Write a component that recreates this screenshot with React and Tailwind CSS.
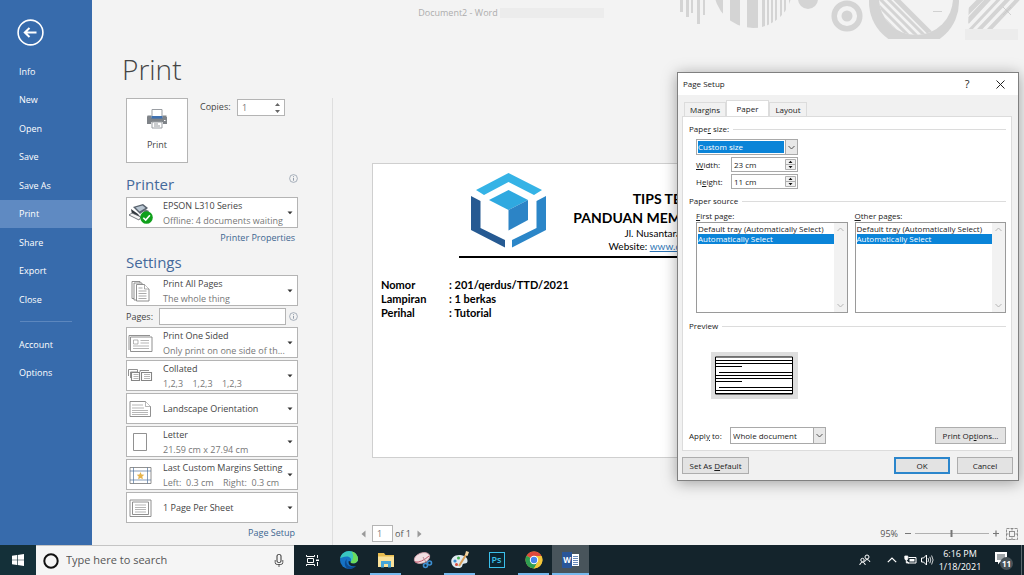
import React from "react";

const menuItems = ["Info", "New", "Open", "Save", "Save As", "Print", "Share", "Export", "Close"];

const Sidebar = () => (
    <aside className="w-[92px] shrink-0 bg-[#376bac] text-white text-[9px]">
        <button type="button" aria-label="Back" className="block mt-[19px] ml-[17px]">
            <svg width="27" height="27" viewBox="0 0 27 27" fill="none" stroke="white">
                <circle cx="13.5" cy="13.5" r="12.4" strokeWidth="1.6" />
                <path d="M19.5 13.5H8.5M12.5 9l-4.7 4.5 4.7 4.5" strokeWidth="2" />
            </svg>
        </button>
        <nav className="mt-[11px]">
            <div className="grid auto-rows-fr h-[257px]">
                {menuItems.map((item) => (
                    <a
                        key={item}
                        href="#"
                        className={`flex items-center pl-[19px] ${item === "Print" ? "bg-[#5f8ac2]" : ""}`}
                    >
                        {item}
                    </a>
                ))}
            </div>
            <hr className="mt-[7px] mb-[9px] mx-5 border-[#5c87be]" />
            <a href="#" className="flex items-center h-7 pl-[19px]">Account</a>
            <a href="#" className="flex items-center h-7 pl-[19px]">Options</a>
        </nav>
    </aside>
);

const Decoration = () => (
    <svg className="absolute right-0 top-0" width="344" height="40" viewBox="680 0 344 40" fill="#d4d4d4">
        <defs>
            <clipPath id="disc"><circle cx="753" cy="-11" r="39" /></clipPath>
            <clipPath id="ringBox"><rect x="860" y="0" width="110" height="39" /></clipPath>
            <clipPath id="ringHole"><circle cx="916" cy="-2" r="37" /></clipPath>
            <clipPath id="corner"><path d="M969 0h51l-26 29h-26z" /></clipPath>
        </defs>
        <path d="M680 0h3v12h-3zM686 0h3v17h-3zM691 0h2v13h-2zM697 0h3v24h-3zM703 0h2v15h-2z" />
        <g clipPath="url(#disc)">
            <path d="M714 0h9v30h-9zM730 0h10v30h-10zM747 0h11v30h-11zM762 0h3v30h-3zM767 0h2v30h-2zM771 0h2v30h-2zM775 0h2v30h-2zM780 0h2v30h-2zM784 0h2v30h-2zM789 0h2v30h-2z" />
        </g>
        <circle cx="808" cy="-1" r="10" />
        <circle cx="847" cy="16" r="12.8" fill="none" stroke="#d4d4d4" strokeWidth="5.5" />
        <circle cx="847" cy="16" r="5.5" />
        <g clipPath="url(#ringBox)">
            <circle cx="914" cy="2" r="45" />
            <circle cx="916" cy="-2" r="37" fill="#f3f3f3" />
            <g clipPath="url(#ringHole)" stroke="#d4d4d4">
                <path d="M893 -4l44 44" strokeWidth="5" />
                <path d="M886 -3l44 44M880 -1l44 44M874 1l44 44M869 4l44 44M864 8l44 44" strokeWidth="3" />
            </g>
        </g>
        <g clipPath="url(#corner)" stroke="#d4d4d4">
            <path d="M1021 -4l-36 38M1012 -5l-36 38" strokeWidth="4" />
            <path d="M1003 -5l-36 38" strokeWidth="3" />
            <path d="M993 -6l-26 28M986 -6l-20 20" strokeWidth="5" />
        </g>
        <path d="M933 11.500h9M1003 7l8 8M1011 7l-8 8" stroke="#c8c8c8" strokeWidth=".8" fill="none" />
        <path d="M965 29h53v11h-53z" fill="#ececec" />
    </svg>
);

const InfoIcon = () => (
    <svg width="9" height="9" viewBox="0 0 9 9" fill="none" stroke="#8793a3">
        <circle cx="4.500" cy="4.500" r="3.900" strokeWidth="0.700" />
        <path d="M4.500 4v2.700M4.500 2.200v1" strokeWidth="0.900" />
    </svg>
);

const PrinterIcon = () => (
    <svg width="22" height="20" viewBox="0 0 22 20">
        <path d="M1.500 6.500h4v2h11v-2h4v1.500h.5v7h-4v-2H5v2H1V8z" fill="#7f8388" />
        <path d="M6 .5h10v7H6z" fill="#fff" stroke="#9a9ea3" />
        <path d="M5.500 7h11v2.600h-11z" fill="#3f71b0" />
        <path d="M6 13h10v6H6z" fill="#fff" stroke="#9a9ea3" />
        <path d="M8 15h4M8 17h6" stroke="#8b8f94" strokeWidth=".9" />
        <path d="M18 11h1.500v1H18z" fill="#fff" />
    </svg>
);

const EpsonIcon = () => (
    <svg width="25" height="24" viewBox="0 0 25 24">
        <path d="M5 6l10-3 5 4-8 6z" fill="#59636e" />
        <path d="M7.500 6.500l7-2 3 2.500-6 3.500z" fill="#b9c6d2" />
        <path d="M3 8l7 5 3 4-9-4z" fill="#30363c" />
        <path d="M1 14l3-2 9 4-2 3z" fill="#f5f5f5" stroke="#555c63" strokeWidth=".8" />
        <path d="M17 8l4 2-2 4-6 1z" fill="#70777e" />
        <circle cx="18.500" cy="16.500" r="6.300" fill="#10a01c" />
        <path d="M15.300 16.700l2.400 2.400 4.200-4.800" stroke="#fff" strokeWidth="1.600" fill="none" />
    </svg>
);

const strokeProps = { fill: "#fff", stroke: "#858585", strokeWidth: 0.9 };

const PagesIcon = () => (
    <svg width="25" height="24" viewBox="0 0 25 24" {...strokeProps}>
        <path d="M4 2.500h8v17H4z" />
        <path d="M6 4h8v17H6z" />
        <path d="M8.500 5.500h8l4.500 4.500v12h-12.500z" />
        <path d="M16.500 5.500v4.500h4.500M10.500 9h4M10.500 12h8M10.500 14.500h8M10.500 17h8M10.500 19.500h8" strokeWidth=".7" />
    </svg>
);

const OneSidedIcon = () => (
    <svg width="25" height="24" viewBox="0 0 25 24" {...strokeProps}>
        <path d="M1 19V4.500h21" fill="none" />
        <path d="M2.500 6h21.500v14.500h-21.500z" />
        <path d="M5.500 9h4.500v4H5.500zM12.500 9.500H21M12.500 12H21M5 15h16M5 17.500h16" strokeWidth=".6" />
    </svg>
);

const CollatedIcon = () => (
    <svg width="25" height="24" viewBox="0 0 25 24" {...strokeProps}>
        <path d="M.5 12V5.500h9V8h-7v6M12 8V6.500h9" />
        <path d="M3.500 8.500h8v8h-8zM13.500 8.500h10v8h-10z" strokeWidth="1.100" />
        <path d="M5.500 10.500h5M5.500 12.500h5M5.500 14.500h5M16 10.500h6M16 12.500h6M16 14.500h6" strokeWidth=".6" />
    </svg>
);

const LandscapeIcon = () => (
    <svg width="25" height="24" viewBox="0 0 25 24" {...strokeProps}>
        <path d="M2 4.500h15.500l5 5v10H2z" />
        <path d="M17.500 4.500v5h5M4 8h11M4 11h12M4 13.500h16M4 15.500h16M4 17.500h16" strokeWidth=".6" />
    </svg>
);

const LetterIcon = () => (
    <svg width="25" height="24" viewBox="0 0 25 24" {...strokeProps}>
        <path d="M5.500 3.500h13v17h-13z" />
    </svg>
);

const MarginsIcon = () => (
    <svg width="25" height="24" viewBox="0 0 25 24" {...strokeProps}>
        <path d="M2 4.500h21v16H2z" />
        <path d="M5.500 4.500v16M19.500 4.500v16M2 8h21M2 17h21" stroke="#51749e" strokeWidth=".7" />
        <path d="M12.500 9l1.100 2.500 2.700.3-2 1.800.6 2.700-2.400-1.400-2.400 1.400.6-2.700-2-1.800 2.700-.3z" fill="#e5b34c" stroke="none" />
    </svg>
);

const SheetIcon = () => (
    <svg width="25" height="24" viewBox="0 0 25 24" {...strokeProps}>
        <path d="M2 4h21v16.500H2z" />
        <path d="M4.500 6h16v12.500h-16z" />
        <path d="M7 9h11M7 11.500h11M7 13.500h11M7 16h11" strokeWidth=".6" />
    </svg>
);

const OptionBox = ({ icon, title, detail }) => (
    <button
        type="button"
        className="flex items-center w-full h-[31px] border border-[#b4b4b4] bg-white text-left text-[9px] leading-[15px]"
    >
        <span className="w-9 pl-px shrink-0">{icon}</span>
        <span className="flex-1 min-w-0 whitespace-pre">
            <span className="block text-[#444]">{title}</span>
            {detail && <span className="block text-[#777]">{detail}</span>}
        </span>
        <svg className="mr-1 shrink-0" width="6" height="4" viewBox="0 0 6 4">
            <path d="M.5 .5h5L3 3.300z" fill="#333" />
        </svg>
    </button>
);

const PrintSettings = () => (
    <section className="w-[241px] shrink-0 pl-[34px] pr-[34px] border-r border-[#dedede] text-[9px] text-[#444]">
        <div className="flex items-start">
            <button
                type="button"
                className="flex flex-col items-center w-[62px] h-[65px] pt-[10px] gap-2 border border-[#b4b4b4] bg-white"
            >
                <PrinterIcon />
                <span className="leading-4">Print</span>
            </button>
            <label htmlFor="copies" className="ml-3 mt-px leading-4 w-[37px]">Copies:</label>
            <div className="flex items-center w-12 h-[17px] mt-px border border-[#b4b4b4] bg-white">
                <input id="copies" defaultValue="1" className="w-9 pl-1 text-[#777] outline-none" />
                <svg width="7" height="12" viewBox="0 0 7 12" fill="#666">
                    <path d="M1 4l2.500-3L6 4zM1 8l2.500 3L6 8z" />
                </svg>
            </div>
        </div>

        <div className="flex justify-between h-[34px] pt-[11px]">
            <h2 className="text-[15px] leading-5 text-[#44699b]">Printer</h2>
            <InfoIcon />
        </div>
        <OptionBox icon={<EpsonIcon />} title="EPSON L310 Series" detail="Offline: 4 documents waiting" />
        <div className="text-right h-[19px] leading-[19px] pr-[3px]">
            <a href="#" className="text-[#3d6691]">Printer Properties</a>
        </div>

        <h2 className="h-7 pt-[5px] text-[15px] leading-5 text-[#44699b]">Settings</h2>
        <div className="flex flex-col gap-[2px]">
            <OptionBox icon={<PagesIcon />} title="Print All Pages" detail="The whole thing" />
            <div className="flex items-center h-[17px]">
                <label htmlFor="pages" className="w-[33px]">Pages:</label>
                <input id="pages" className="w-[128px] h-[17px] px-1 border border-[#b4b4b4] bg-white" />
                <span className="ml-[3px]"><InfoIcon /></span>
            </div>
            <OptionBox icon={<OneSidedIcon />} title="Print One Sided" detail="Only print on one side of th..." />
            <OptionBox icon={<CollatedIcon />} title="Collated" detail="1,2,3    1,2,3    1,2,3" />
            <OptionBox icon={<LandscapeIcon />} title="Landscape Orientation" />
            <OptionBox icon={<LetterIcon />} title="Letter" detail="21.59 cm x 27.94 cm" />
            <OptionBox icon={<MarginsIcon />} title="Last Custom Margins Setting" detail="Left:  0.3 cm    Right:  0.3 cm" />
            <OptionBox icon={<SheetIcon />} title="1 Page Per Sheet" />
        </div>
        <div className="text-right h-[19px] leading-[19px] pr-[3px]">
            <a href="#" className="text-[#3d6691]">Page Setup</a>
        </div>
    </section>
);

const CubeLogo = () => (
    <svg width="75" height="75" viewBox="0 0 75 75">
        <path d="M37.500 0L71 17l-8 5-25.500-13L13 22l-8-5z" fill="#35b3e6" />
        <path d="M0 23l9.500 5v27L34 67v7.500L0 57z" fill="#265a92" />
        <path d="M75 23l-9.500 5v27L41 67v7.500l34-17.500z" fill="#2b86c8" />
        <path d="M37.500 17L57 27 37.500 37 18 27z" fill="#2fa9e0" />
        <path d="M57 27v20L37.500 57.500V37z" fill="#2c84c6" />
    </svg>
);

const letterFields = [
    ["Nomor", ": 201/qerdus/TTD/2021"],
    ["Lampiran", ": 1 berkas"],
    ["Perihal", ": Tutorial"],
];

const Preview = () => (
    <section className="flex-1 min-w-0 flex flex-col justify-between pt-[65px]">
        <article className="ml-[39px] mr-[34px] h-[295px] border border-[#cfcfcf] bg-white text-black font-['Lato',sans-serif]">
            <div className="ml-[86px] mr-4 pl-3 border-b-2 border-black flex h-[94px] pt-[9px]">
                <CubeLogo />
                <div className="flex flex-col w-[135px] pt-4 shrink-0 text-right whitespace-nowrap">
                    <b className="text-[14px] leading-[19px]">TIPS TE</b>
                    <b className="text-[14px] leading-[19px]">PANDUAN MEM</b>
                    <span className="text-[10px] leading-[13px]">Jl. Nusantara</span>
                    <span className="text-[10px] leading-[13px]">
                        Website: <a href="#" className="text-[#2e75b6] underline">www.q</a>
                    </span>
                </div>
            </div>
            <dl className="grid grid-cols-[68px_1fr] mt-5 ml-2 text-[11px] leading-[14px] font-bold">
                {letterFields.map(([name, value]) => (
                    <React.Fragment key={name}>
                        <dt>{name}</dt>
                        <dd>{value}</dd>
                    </React.Fragment>
                ))}
            </dl>
        </article>

        <footer className="flex items-center justify-between h-[23px] pl-7 pr-[6px] text-[9px] text-[#555]">
            <div className="flex items-center">
                <button type="button" aria-label="Previous page">
                    <svg width="5" height="8" viewBox="0 0 5 8"><path d="M4.500 .5v7L.5 4z" fill="#999" /></svg>
                </button>
                <input aria-label="Page" defaultValue="1" className="w-[21px] h-[17px] ml-[6px] pl-1 border border-[#b4b4b4] bg-white text-[#777]" />
                <span className="ml-[2px]">of 1</span>
                <button type="button" aria-label="Next page" className="ml-[6px]">
                    <svg width="5" height="8" viewBox="0 0 5 8"><path d="M.5 .5v7l4-3.500z" fill="#999" /></svg>
                </button>
            </div>
            <div className="flex items-center">
                <span>95%</span>
                <svg className="ml-[6px]" width="96" height="11" viewBox="0 0 96 11" stroke="#777">
                    <path d="M1 5.500h6M89 5.500h6M92 2.500v6" strokeWidth="1.200" />
                    <path d="M11 5.500h74" stroke="#b0b0b0" />
                    <path d="M47.500 2v7" strokeWidth="2" />
                </svg>
                <svg className="ml-[6px]" width="12" height="12" viewBox="0 0 12 12" fill="none" stroke="#777" strokeWidth=".8">
                    <rect x=".5" y=".5" width="11" height="11" strokeDasharray="3 1" />
                    <rect x="3.500" y="3.500" width="5" height="5" />
                    <path d="M6 0v2.500M6 9.500V12M0 6h2.500M9.500 6H12" />
                </svg>
            </div>
        </footer>
    </section>
);

const Chevron = ({ up, color = "#555" }) => (
    <svg width="7" height="5" viewBox="0 0 7 5" fill="none" stroke={color}>
        <path d={up ? "M.5 4l3-3 3 3" : "M.5 1l3 3 3-3"} />
    </svg>
);

const GroupTitle = ({ children }) => (
    <div className="flex items-center gap-1 h-[14px]">
        <span>{children}</span>
        <hr className="flex-1 border-[#dcdcdc]" />
    </div>
);

const SizeField = ({ id, label, value }) => (
    <div className="flex items-center h-[15px]">
        <label htmlFor={id} className="w-[35px]">{label}</label>
        <div className="flex w-[67px] h-[15px] p-px border border-[#a9a9a9]">
            <input id={id} defaultValue={value} className="flex-1 min-w-0 pl-px outline-none" />
            <svg width="11" height="11" viewBox="0 0 11 11">
                <path d="M.5.5h10v10H.5zM.5 5.500h10" fill="#f0f0f0" stroke="#b0b0b0" />
                <path d="M3.500 4l2-2.300 2 2.300zM3.500 7l2 2.300 2-2.300z" fill="#111" />
            </svg>
        </div>
    </div>
);

const TrayList = ({ id, label }) => (
    <div className="flex-1">
        <div id={id} className="h-3 leading-3">{label}</div>
        <div className="flex h-[91px] border border-[#9a9a9a] bg-white">
            <ul role="listbox" aria-labelledby={id} className="flex-1 pt-px pl-px leading-[10px] whitespace-nowrap">
                <li role="option" aria-selected="false">Default tray (Automatically Select)</li>
                <li role="option" aria-selected="true" className="bg-[#0a84d8] text-white">Automatically Select</li>
            </ul>
            <div className="flex flex-col items-center justify-between w-[13px] py-1 bg-[#f2f2f2]">
                <Chevron up color="#b5b5b5" />
                <Chevron color="#b5b5b5" />
            </div>
        </div>
    </div>
);

const DialogButton = ({ className = "", children }) => (
    <button type="button" className={`h-[17px] border bg-[#e3e3e3] ${className}`}>
        {children}
    </button>
);

const PageSetupDialog = () => (
    <div
        role="dialog"
        aria-label="Page Setup"
        className="absolute top-[72px] right-[5px] w-[342px] border border-[#808080] bg-[#f1f1f1] text-[8px] text-[#1a1a1a] shadow-[0_2px_14px_rgba(0,0,0,0.35)]"
    >
        <div className="flex items-center h-[22px] pl-[5px] pr-[13px] bg-white">
            <h2 className="flex-1">Page Setup</h2>
            <button type="button" className="w-4 text-[11px]">?</button>
            <button type="button" aria-label="Close" className="ml-[21px]">
                <svg width="9" height="9" viewBox="0 0 9 9" stroke="#222"><path d="M.5.5l8 8M8.500.5l-8 8" /></svg>
            </button>
        </div>

        <div role="tablist" className="flex items-end h-[21px] pl-[6px]">
            <button type="button" role="tab" className="w-[42px] h-[14px] border border-b-0 border-[#dcdcdc]">Margins</button>
            <button type="button" role="tab" aria-selected="true" className="w-[43px] h-4 bg-white border border-b-0 border-[#dcdcdc]">Paper</button>
            <button type="button" role="tab" className="w-[38px] h-[14px] border border-b-0 border-[#dcdcdc]">Layout</button>
        </div>

        <div className="ml-1 mr-[6px] pl-[6px] pr-[5px] pt-[5px] pb-[6px] bg-white border border-[#dcdcdc]">
            <GroupTitle>Pape<u>r</u> size:</GroupTitle>
            <div className="ml-[7px] mt-[3px] flex flex-col gap-[2px]">
                <div className="flex items-center w-[102px] h-4 border border-[#a9a9a9]">
                    <select aria-label="Paper size" className="flex-1 h-[12px] mx-px appearance-none bg-[#0a84d8] text-white leading-[12px]">
                        <option>Custom size</option>
                    </select>
                    <span className="flex items-center justify-center w-3 h-full bg-[#e8e8e8] border-l border-[#a9a9a9]"><Chevron /></span>
                </div>
                <SizeField id="paper-width" label={<><u>W</u>idth:</>} value="23 cm" />
                <SizeField id="paper-height" label={<>H<u>e</u>ight:</>} value="11 cm" />
            </div>
            <div className="mt-[5px]"><GroupTitle>Paper source</GroupTitle></div>
            <div className="flex gap-[7px] ml-[7px] mt-[2px]">
                <TrayList id="first-page" label={<><u>F</u>irst page:</>} />
                <TrayList id="other-pages" label={<><u>O</u>ther pages:</>} />
            </div>
            <div className="mt-[6px]"><GroupTitle>Preview</GroupTitle></div>
            <svg className="ml-[22px] mt-[19px]" width="87" height="47" viewBox="0 0 87 47">
                <path d="M0 0h87v47H0z" fill="#dedede" />
                <path d="M4.500 5h77v37h-77z" fill="#fff" stroke="#000" />
                <path d="M5 8.500h76M5 11.500h76M5 14.500h26M8 20.500h73M5 23.500h76M5 26.500h76M5 29.500h26M8 35.500h73M5 38.500h76M5 41.500h76" stroke="#000" />
            </svg>
            <div className="flex items-center mt-7">
                <label htmlFor="apply-to" className="w-[41px]">Appl<u>y</u> to:</label>
                <div className="flex w-[96px] h-[17px] border border-[#a9a9a9]">
                    <select id="apply-to" className="flex-1 pl-[2px] appearance-none">
                        <option>Whole document</option>
                    </select>
                    <span className="flex items-center justify-center w-3 bg-[#e8e8e8] border-l border-[#a9a9a9]"><Chevron /></span>
                </div>
                <DialogButton className="ml-auto w-[71px] border-[#adadad]">Print Op<u>t</u>ions...</DialogButton>
            </div>
        </div>

        <div className="flex pl-1 pr-[5px] pt-[6px] pb-[6px]">
            <DialogButton className="w-[67px] border-[#adadad]">Set As <u>D</u>efault</DialogButton>
            <DialogButton className="ml-auto w-14 border-2 border-[#2b86cc]">OK</DialogButton>
            <DialogButton className="ml-[7px] w-14 border-[#adadad]">Cancel</DialogButton>
        </div>
    </div>
);

const EdgeIcon = () => (
    <svg width="20" height="20" viewBox="0 0 20 20">
        <circle cx="10" cy="10" r="9" fill="#1673c4" />
        <path d="M1.200 8.500C2 3.800 6 1 10 1c5 0 9 3.600 9 8 0 3-2.300 4.600-5 4.600-2 0-3-.8-2.300-2C13 9 11 6.500 7.800 6.500c-3 0-5.500 1.200-6.600 2z" fill="#3ac6c0" />
        <path d="M12 1.300c4 .9 7 4 7 7.700 0 3-2.300 4.600-5 4.600-1.700 0-2.700-.6-2.400-1.500C15 9 15 4 12 1.300z" fill="#6ddc5b" />
        <path d="M8 9c-1.500 3 0 7 4 7.800 2 .4 4-.2 5.500-1.500C15.500 18.500 12 19.500 9 18.900 5 17 5 11 8 9z" fill="#0d4c93" />
        <path d="M11.700 11.600c-.7 1.200.3 2 2.300 2 2 0 3.700-.8 4.500-2.400l1 .8-1.800 3.500c-3.500 2-9 .5-8-4.500z" fill="#14242c" />
    </svg>
);

const ExplorerIcon = () => (
    <svg width="20" height="20" viewBox="0 0 20 20">
        <path d="M2 3h6l1.500 2H18v12H2z" fill="#e9bd4f" />
        <path d="M2 6.500h16V17H2z" fill="#fbe29a" />
        <path d="M5 11h10v6.500h-3V14H8v3.500H5z" fill="#46a5d8" />
    </svg>
);

const SnipIcon = () => (
    <svg width="20" height="20" viewBox="0 0 20 20">
        <ellipse cx="9" cy="8" rx="8" ry="5" transform="rotate(-20 9 8)" fill="#f1dfe2" stroke="#d4a0aa" strokeWidth=".8" />
        <path d="M2 12q6 1 14-6" stroke="#c4576c" strokeWidth="1" fill="none" />
        <path d="M10 7l4 7" stroke="#b48a92" />
        <g fill="none" stroke="#3d8fd2" strokeWidth="1.600"><circle cx="12.500" cy="15.500" r="2" /><circle cx="16.500" cy="13" r="2" /></g>
    </svg>
);

const PaintIcon = () => (
    <svg width="20" height="20" viewBox="0 0 20 20">
        <path d="M1.500 13C0 8 5 4.500 10 5c5 .4 8 3 7.500 6.500-.3 2-2.500 2-4 2.300-1.500.4-.5 2.500-2.500 3.700-3 1.500-8.500.3-9.500-4.500z" fill="#dfeaf1" />
        <circle cx="5" cy="11" r="1.600" fill="#3a8ed0" />
        <circle cx="8.500" cy="8" r="1.500" fill="#49b256" />
        <circle cx="6.500" cy="14.500" r="1.500" fill="#d64b3e" />
        <path d="M9 16l7.500-12" stroke="#d9a05b" strokeWidth="2" />
        <path d="M15 5l1-4 3 1-1.500 4z" fill="#f2d5a5" />
    </svg>
);

const PhotoshopIcon = () => (
    <span className="flex items-center justify-center w-4 h-4 border border-[#3bc0ea] bg-[#0b2431] text-[#3bc0ea] text-[9px] font-semibold">Ps</span>
);

const ChromeIcon = () => (
    <svg width="20" height="20" viewBox="0 0 20 20">
        <circle cx="10" cy="10" r="8.500" fill="#f4c63a" />
        <path d="M10 10L2.600 5.800A8.500 8.500 0 0 1 17.400 5.800z" fill="#df4a3c" />
        <path d="M10 10L2.600 5.800A8.500 8.500 0 0 0 10 18.500l3.700-6.400z" fill="#2f9e53" />
        <path d="M10 6h7.400a8.500 8.500 0 0 1-7.400 12.500l3.600-6.400z" fill="#f4c63a" />
        <circle cx="10" cy="10" r="4.200" fill="#fff" />
        <circle cx="10" cy="10" r="3.200" fill="#4584ec" />
    </svg>
);

const WordIcon = () => (
    <span className="flex items-center">
        <span className="flex items-center justify-center w-[10px] h-4 bg-[#2a5699] text-white text-[8px] font-bold">W</span>
        <svg width="7" height="14" viewBox="0 0 7 14">
            <path d="M0 1h7v12H0z" fill="#fff" />
            <path d="M1 3.500h5M1 5.500h5M1 7.500h5M1 9.500h5M1 11.500h5" stroke="#2a5699" strokeWidth=".7" />
        </svg>
    </span>
);

const apps = [
    { name: "Edge", icon: <EdgeIcon /> },
    { name: "File Explorer", icon: <ExplorerIcon />, open: true },
    { name: "Snipping Tool", icon: <SnipIcon /> },
    { name: "Paint", icon: <PaintIcon />, open: true },
    { name: "Photoshop", icon: <PhotoshopIcon /> },
    { name: "Chrome", icon: <ChromeIcon />, open: true },
    { name: "Word", icon: <WordIcon />, open: true, active: true },
];

const Taskbar = () => (
    <footer className="flex h-[30px] shrink-0 bg-[#14242c] text-white">
        <button type="button" aria-label="Start" className="flex items-center justify-center w-9 bg-[#143039]">
            <svg width="12" height="12" viewBox="0 0 12 12" fill="#fff">
                <path d="M0 1.700l5-.7v4.700H0zM5.700.9L12 0v5.700H5.700zM0 6.300h5V11l-5-.7zM5.700 6.300H12V12l-6.300-.9z" />
            </svg>
        </button>
        <div className="flex items-center w-[258px] bg-[#f5f5f5] border-t border-[#c4c4c4] pl-[7px] pr-[10px]">
            <svg width="16" height="16" viewBox="0 0 16 16"><circle cx="8" cy="8" r="6.700" fill="none" stroke="#111" strokeWidth="2" /></svg>
            <input
                aria-label="Search"
                placeholder="Type here to search"
                className="flex-1 min-w-0 ml-[7px] text-[11px] placeholder:text-[#555] outline-none"
            />
            <svg width="10" height="13" viewBox="0 0 10 13" fill="none" stroke="#333">
                <rect x="3" y=".5" width="4" height="8" rx="1.500" />
                <path d="M1.200 6v2.500q0 2 2 2h3.600q2 0 2-2V6M5 10.500v2.500" strokeWidth=".8" />
            </svg>
        </div>
        <button type="button" aria-label="Task view" className="flex items-center justify-center w-9">
            <svg width="13" height="13" viewBox="0 0 13 13" fill="none" stroke="#fff">
                <path d="M1.500 4.500h6v4h-6zM.5 1v1.500h8V1M.5 12v-1.500h8V12M11.500 1v3M11.500 8v4" />
                <path d="M10 5.500h3v1.500h-3z" fill="#fff" stroke="none" />
            </svg>
        </button>
        <div className="flex">
            {apps.map((app) => (
                <button
                    key={app.name}
                    type="button"
                    aria-label={app.name}
                    className={`relative flex items-center justify-center w-[37px] ${app.active ? "bg-[#48545b]" : ""}`}
                >
                    {app.icon}
                    {app.open && (
                        <span className={`absolute bottom-0 h-[2px] bg-[#76b9ed] ${app.active ? "inset-x-0" : "inset-x-[3px]"}`} />
                    )}
                </button>
            ))}
        </div>
        <div className="ml-auto flex items-center pr-[2px]">
            <svg width="12" height="12" viewBox="0 0 12 12" fill="none" stroke="#fff">
                <circle cx="8" cy="3" r="2" /><path d="M5.500 8q.5-2.500 2.500-2.500T11 8" />
                <circle cx="3.500" cy="6" r="1.700" /><path d="M.7 11q.4-2.700 2.800-2.700T6.300 11" />
            </svg>
            <svg className="ml-4" width="10" height="6" viewBox="0 0 10 6" fill="none" stroke="#fff"><path d="M.8 5.200L5 1l4.200 4.200" strokeWidth="1.200" /></svg>
            <svg className="ml-[7px]" width="13" height="10" viewBox="0 0 13 10" fill="none" stroke="#fff">
                <path d="M4.500 2.500h7.500v5.500H4" /><path d="M5.500 4h5v2.500h-5z" fill="#fff" stroke="none" />
                <path d="M.8 1h3v2.500q0 1.500-1.500 1.500T.8 3.500zM2.300 5v3H5" fill="#fff" strokeWidth=".8" />
            </svg>
            <svg className="ml-1" width="13" height="12" viewBox="0 0 13 12" fill="none" stroke="#fff">
                <path d="M.5 4h2l3-3v10l-3-3h-2z" /><path d="M7 4q1.200 2 0 4M8.800 2.800q2 3.200 0 6.400M10.600 1.500q3 4.500 0 9" strokeWidth=".8" />
            </svg>
            <div className="w-[52px] text-center text-[9px] leading-[13px]">
                <div>6:16 PM</div>
                <div>1/18/2021</div>
            </div>
            <button type="button" aria-label="Notifications" className="relative ml-[9px] mr-[9px]">
                <svg width="17" height="16" viewBox="0 0 17 16">
                    <path d="M0 0h12v10H5l-2 2.500V10H0z" fill="#fff" />
                    <path d="M2 3h8M2 5h8M2 7h6" stroke="#14242c" strokeWidth=".8" />
                </svg>
                <span className="absolute left-[5px] top-[5px] flex items-center justify-center w-[13px] h-[13px] rounded-full bg-[#4a5459] text-[8px] font-bold">11</span>
            </button>
            <span className="w-px h-[30px] bg-[#5b676d]" />
        </div>
    </footer>
);

const App = () => (
    <div className="relative flex flex-col h-screen overflow-hidden bg-[#f3f3f3] font-['Open_Sans','Noto_Sans',sans-serif]">
        <main className="flex flex-1 min-h-0">
            <Sidebar />
            <div className="relative flex-1 min-w-0 flex flex-col">
                <Decoration />
                <header className="h-[98px] shrink-0">
                    <div className="flex items-center justify-center gap-[2px] h-[26px] pr-[94px] text-[9px] text-[#adadad]">
                        <span>Document2 - Word</span>
                        <span className="w-[104px] h-[10px] bg-[#ececec]" />
                    </div>
                    <h1 className="ml-[30px] mt-[22px] text-[28px] leading-[42px] font-light text-[#444]">Print</h1>
                </header>
                <div className="flex flex-1 min-h-0">
                    <PrintSettings />
                    <Preview />
                </div>
            </div>
        </main>
        <Taskbar />
        <PageSetupDialog />
    </div>
);

export default App;
